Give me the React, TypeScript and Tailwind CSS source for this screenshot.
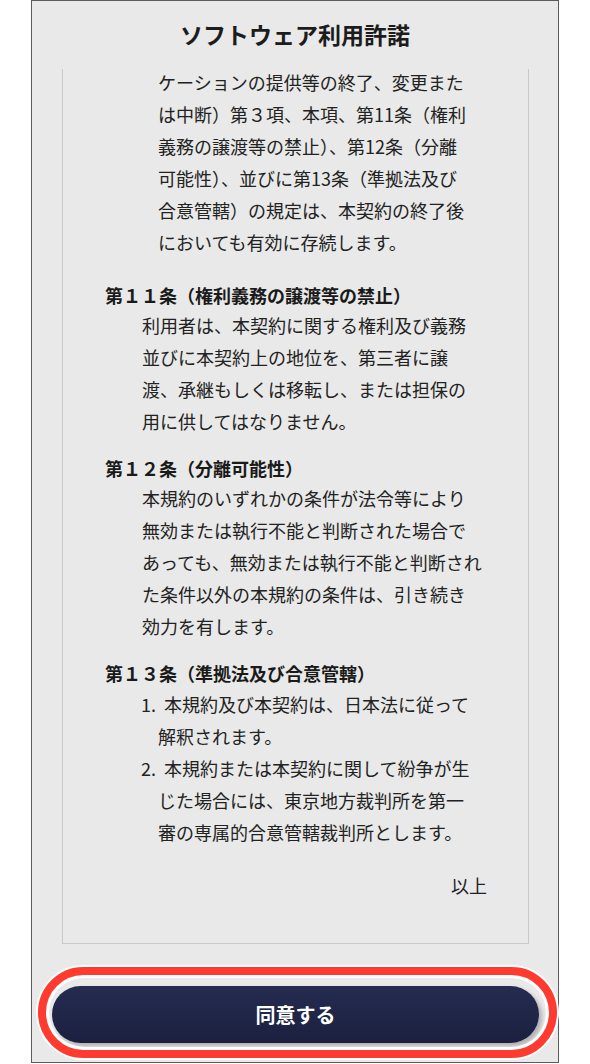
import React from 'react'

const jp = { fontFamily: '"Noto Sans CJK JP", "Noto Sans", sans-serif' }

function Lines({ lines }: { lines: string[] }) {
  return (
    <>
      {lines.map((l, i) => (
        <span key={i} className="block whitespace-nowrap">
          {l}
        </span>
      ))}
    </>
  )
}

function Heading({ children }: { children: React.ReactNode }) {
  return (
    <div className="pl-[42px] text-[18px] font-bold leading-[28px] text-[#1a1a1a]">
      {children}
    </div>
  )
}

function Body({ lines }: { lines: string[] }) {
  return (
    <div className="pl-[79px] text-[18px] leading-[32px] text-[#222]">
      <Lines lines={lines} />
    </div>
  )
}

function Item({ n, lines }: { n: string; lines: string[] }) {
  return (
    <div className="relative pl-[95px] text-[18px] leading-[32px] text-[#222]">
      <span className="absolute left-[78px] top-0">{n}</span>
      <span className="block whitespace-nowrap pl-[6px]">{lines[0]}</span>
      <Lines lines={lines.slice(1)} />
    </div>
  )
}

export default function App() {
  return (
    <div className="h-[1064px] w-[590px] bg-white pl-[31px]" style={jp}>
      <div className="flex h-[1063px] w-[528px] flex-col border border-[#5c5c5c] bg-[#e8e9e8]">
        <div className="flex h-[68px] shrink-0 items-center justify-center pb-[2px] text-[23px] font-bold text-[#1c1c1c]">
          ソフトウェア利用許諾
        </div>

        <div className="ml-[30px] h-[875px] w-[467px] shrink-0 overflow-hidden border-x border-b border-[#c8c9c8]">
          <div className="-mt-[3px]">
            <div className="pl-[95px] text-[18px] leading-[32px] text-[#222]">
              <Lines
                lines={[
                  'ケーションの提供等の終了、変更また',
                  'は中断）第３項、本項、第11条（権利',
                  '義務の譲渡等の禁止）、第12条（分離',
                  '可能性）、並びに第13条（準拠法及び',
                  '合意管轄）の規定は、本契約の終了後',
                  'においても有効に存続します。',
                ]}
              />
            </div>

            <div className="mt-[23px]">
              <Heading>第１１条（権利義務の譲渡等の禁止）</Heading>
              <Body
                lines={[
                  '利用者は、本契約に関する権利及び義務',
                  '並びに本契約上の地位を、第三者に譲',
                  '渡、承継もしくは移転し、または担保の',
                  '用に供してはなりません。',
                ]}
              />
            </div>

            <div className="mt-[17px]">
              <Heading>第１２条（分離可能性）</Heading>
              <Body
                lines={[
                  '本規約のいずれかの条件が法令等により',
                  '無効または執行不能と判断された場合で',
                  'あっても、無効または執行不能と判断され',
                  'た条件以外の本規約の条件は、引き続き',
                  '効力を有します。',
                ]}
              />
            </div>

            <div className="mt-[17px]">
              <Heading>第１３条（準拠法及び合意管轄）</Heading>
              <div className="mt-[1px]">
                <Item n="1." lines={['本規約及び本契約は、日本法に従って', '解釈されます。']} />
                <Item
                  n="2."
                  lines={[
                    '本規約または本契約に関して紛争が生',
                    'じた場合には、東京地方裁判所を第一',
                    '審の専属的合意管轄裁判所とします。',
                  ]}
                />
              </div>
            </div>

            <div className="mt-[21px] pr-[41px] text-right text-[18px] leading-[32px] text-[#222]">以上</div>
          </div>
        </div>

        <div className="relative ml-[20px] mt-[42px] w-[487px]">
          <button className="flex h-[57px] w-full items-center justify-center rounded-full bg-gradient-to-b from-[#252c50] to-[#1b2040] text-[20px] font-bold text-white shadow-[3px_3px_4px_rgba(0,0,0,0.25)]">
            同意する
          </button>
          <div className="pointer-events-none absolute -left-[14px] -top-[19px] h-[91px] w-[519px] rounded-full border-[8px] border-[#ff3b30] shadow-[0_0_0_2px_#fff,inset_0_0_0_3px_#fff]" />
        </div>
      </div>
    </div>
  )
}
